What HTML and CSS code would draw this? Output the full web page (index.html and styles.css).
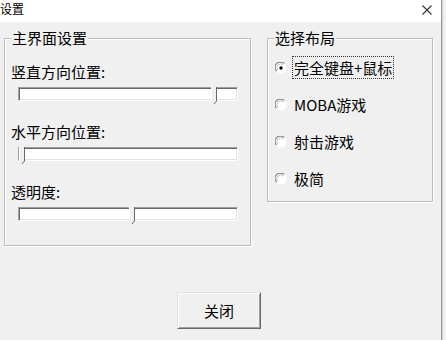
FILE: index.html
```html
<!DOCTYPE html>
<html lang="zh-CN">
<head>
  <meta charset="UTF-8">
  <title>设置</title>
  <link rel="stylesheet" href="styles.css">
</head>
<body>
  <div class="window">
    <div class="titlebar">
      <span class="title">设置</span>
      <span class="close">
        <svg width="10" height="10" viewBox="0 0 10 10"><path d="M0.5 0.5 L9.5 9.5 M9.5 0.5 L0.5 9.5" stroke="#333" stroke-width="1.1" fill="none"/></svg>
      </span>
    </div>

    <div class="content">
      <div class="groups">
        <div class="group group-main">
          <span class="legend">主界面设置</span>

          <div class="field">
            <div class="label">竖直方向位置:</div>
            <div class="track">
              <span class="thumb" style="left: 192px"><svg width="6" height="17" viewBox="0 0 6 17"><path d="M0 0 H5 V14 L3 17 L0 14 Z" fill="#f0f0f0"/><path d="M0.5 0 V14" stroke="#fff"/><path d="M5.5 0 V14 L3 17" stroke="#696969" fill="none"/></svg></span>
            </div>
          </div>

          <div class="field">
            <div class="label">水平方向位置:</div>
            <div class="track">
              <span class="thumb" style="left: 0px"><svg width="6" height="17" viewBox="0 0 6 17"><path d="M0 0 H5 V14 L3 17 L0 14 Z" fill="#f0f0f0"/><path d="M0.5 0 V14" stroke="#fff"/><path d="M5.5 0 V14 L3 17" stroke="#696969" fill="none"/></svg></span>
            </div>
          </div>

          <div class="field">
            <div class="label">透明度:</div>
            <div class="track">
              <span class="thumb" style="left: 110px"><svg width="6" height="17" viewBox="0 0 6 17"><path d="M0 0 H5 V14 L3 17 L0 14 Z" fill="#f0f0f0"/><path d="M0.5 0 V14" stroke="#fff"/><path d="M5.5 0 V14 L3 17" stroke="#696969" fill="none"/></svg></span>
            </div>
          </div>
        </div>

        <div class="group group-layout">
          <span class="legend">选择布局</span>

          <div class="radio">
            <svg class="dot" width="12" height="12" viewBox="0 0 12 12"><circle cx="6" cy="6" r="5.5" fill="#fff"/><path d="M1.6 9.2 A5 5 0 0 1 9.2 1.6" fill="none" stroke="#8a8a8a" stroke-width="1.2"/><path d="M3 8.2 A3.6 3.6 0 0 1 8.2 3" fill="none" stroke="#c0c0c0"/><circle cx="6" cy="6" r="1.7" fill="#000"/></svg>
            <span class="radio-text focused">完全键盘+鼠标</span>
          </div>
          <div class="radio">
            <svg class="dot" width="12" height="12" viewBox="0 0 12 12"><circle cx="6" cy="6" r="5.5" fill="#fff"/><path d="M1.6 9.2 A5 5 0 0 1 9.2 1.6" fill="none" stroke="#8a8a8a" stroke-width="1.2"/><path d="M3 8.2 A3.6 3.6 0 0 1 8.2 3" fill="none" stroke="#c0c0c0"/></svg>
            <span class="radio-text">MOBA游戏</span>
          </div>
          <div class="radio">
            <svg class="dot" width="12" height="12" viewBox="0 0 12 12"><circle cx="6" cy="6" r="5.5" fill="#fff"/><path d="M1.6 9.2 A5 5 0 0 1 9.2 1.6" fill="none" stroke="#8a8a8a" stroke-width="1.2"/><path d="M3 8.2 A3.6 3.6 0 0 1 8.2 3" fill="none" stroke="#c0c0c0"/></svg>
            <span class="radio-text">射击游戏</span>
          </div>
          <div class="radio">
            <svg class="dot" width="12" height="12" viewBox="0 0 12 12"><circle cx="6" cy="6" r="5.5" fill="#fff"/><path d="M1.6 9.2 A5 5 0 0 1 9.2 1.6" fill="none" stroke="#8a8a8a" stroke-width="1.2"/><path d="M3 8.2 A3.6 3.6 0 0 1 8.2 3" fill="none" stroke="#c0c0c0"/></svg>
            <span class="radio-text">极简</span>
          </div>
        </div>
      </div>

      <div class="footer">
        <button class="btn">关闭</button>
      </div>
    </div>
  </div>
</body>
</html>
```

FILE: styles.css
```css
* {
  box-sizing: border-box;
}

body {
  margin: 0;
  padding: 0;
  background: #f0f0f0;
  font-family: "Noto Sans CJK SC", "Noto Sans", sans-serif;
  color: #000;
  height: 340px;
  overflow: hidden;
}

.window {
  width: 442px;
  height: 340px;
  background: #f0f0f0;
  border-right: 1px solid #9a9a9a;
  box-shadow: 1px 0 0 #cfcfcf;
}

.titlebar {
  height: 22px;
  background: #fff;
  display: flex;
  align-items: center;
  justify-content: space-between;
}

.title {
  font-size: 12px;
  line-height: 16px;
  margin-top: -4px;
}

.close {
  display: flex;
  margin-right: 9px;
  margin-top: -2px;
}

.content {
  padding: 16px 0 0 4px;
}

.groups {
  display: flex;
  align-items: flex-start;
  gap: 16px;
}

.group {
  position: relative;
  border: 1px solid #bcbcbc;
  box-shadow: 1px 1px 0 #fff, inset 1px 1px 0 #fff;
}

.legend {
  position: absolute;
  top: -10px;
  left: 6px;
  padding: 0 1px;
  background: #f0f0f0;
  font-size: 15px;
  line-height: 18px;
}

.group-main {
  width: 247px;
  height: 208px;
  padding: 23px 0 0 6px;
}

.field {
  margin-bottom: 21px;
}

.label {
  font-size: 15px;
  line-height: 20px;
  height: 20px;
}

.track {
  position: relative;
  margin: 5px 0 0 7px;
  width: 220px;
  height: 14px;
  background: #fff;
  border: 1px solid;
  border-color: #a0a0a0 #fff #fff #a0a0a0;
  box-shadow: inset 1px 1px 0 #696969, inset -1px -1px 0 #e3e3e3;
}

.thumb {
  position: absolute;
  top: -1px;
  display: flex;
}

.group-layout {
  width: 166px;
  height: 164px;
  padding: 10px 0 0 7px;
}

.radio {
  height: 37px;
  display: flex;
  align-items: center;
  gap: 5px;
}

.radio-text {
  font-size: 15px;
  line-height: 19px;
  padding: 1px 1px;
  border: 1px solid transparent;
}

.radio-text.focused {
  border: 1px dotted #333;
}

.footer {
  padding-left: 173px;
  margin-top: 46px;
}

.btn {
  width: 84px;
  height: 37px;
  font-family: "Noto Sans CJK SC", "Noto Sans", sans-serif;
  font-size: 15px;
  color: #000;
  background: #f0f0f0;
  border: 1px solid;
  border-color: #e3e3e3 #696969 #696969 #e3e3e3;
  box-shadow: inset 1px 1px 0 #fff, inset -1px -1px 0 #a0a0a0;
  padding: 0;
}
```
